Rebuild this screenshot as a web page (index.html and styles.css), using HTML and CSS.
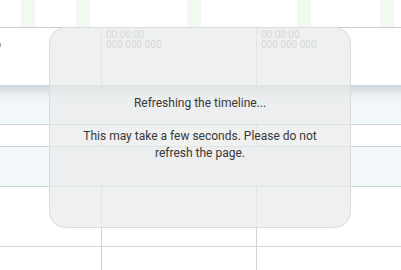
FILE: index.html
```html
<!DOCTYPE html>
<html>
<head>
<meta charset="utf-8">
<link rel="stylesheet" href="styles.css">
</head>
<body>
<div class="page">
  <div class="header">
    <span></span><span class="stripe"></span>
    <span></span><span class="stripe"></span>
    <span></span><span class="stripe"></span>
    <span></span><span class="stripe"></span>
    <span></span><span class="stripe"></span>
  </div>
  <div class="row row-tall">
    <div class="cell"><span class="mark"></span></div>
    <div class="cell line"><div class="ts">00:06:00<br>000 000 000</div></div>
    <div class="cell line"><div class="ts">00:08:00<br>000 000 000</div></div>
  </div>
  <div class="row row-blue shadow"></div>
  <div class="row row-short">
    <div class="cell"></div>
    <div class="cell line"></div>
    <div class="cell line"></div>
  </div>
  <div class="row row-blue"></div>
  <div class="row row-tall2">
    <div class="cell"></div>
    <div class="cell line"></div>
    <div class="cell line"></div>
  </div>
  <div class="row row-last">
    <div class="cell"></div>
    <div class="cell line"></div>
    <div class="cell line"></div>
  </div>

  <div class="overlay">
    <p class="title">Refreshing the timeline...</p>
    <p class="msg">This may take a few seconds. Please do not<br>refresh the page.</p>
  </div>
</div>
</body>
</html>
```
FILE: styles.css
```css
html, body {
  margin: 0;
  padding: 0;
  background: #fff;
}
.page {
  position: relative;
  width: 401px;
  height: 270px;
  overflow: hidden;
  font-family: Roboto, "Liberation Sans", sans-serif;
}
.header {
  height: 27px;
  display: grid;
  grid-template-columns: 21px 14px 41px 14px 97px 14px 96px 14px 69px 14px;
  border-bottom: 1px solid #cdcdcd;
}
.stripe {
  background: #f1f9f1;
}
.row {
  display: grid;
  grid-template-columns: 101px 155px 1fr;
  border-bottom: 1px solid #d4d9dc;
}
.cell.line {
  border-left: 1px solid #d3d3d3;
}
.row-tall { height: 57px; border-bottom: none; }
.row-blue {
  height: 39px;
  background: #f2f7fa;
  border-bottom: 1px solid #c9d2d6;
}
.shadow {
  background: linear-gradient(to bottom, #ccd4d8 0px, #e3e9ec 7px, #f0f5f8 14px, #f2f7fa 20px);
}
.row-short { height: 21px; border-bottom: 1px solid #c9d2d6; }
.row-tall2 { height: 59px; border-bottom: 1px solid #d6d6d6; }
.row-last { height: 30px; border-bottom: none; }
.cell {
  position: relative;
}
.mark {
  display: block;
  width: 1px;
  height: 4px;
  margin-top: 15px;
  background: #aaa;
}
.ts {
  padding: 2px 0 0 4px;
  font-size: 10px;
  line-height: 10px;
  color: #a6a6a6;
}
.overlay {
  position: absolute;
  left: 49px;
  top: 27px;
  width: 300px;
  height: 199px;
  border: 1px solid #dcdcdc;
  border-radius: 16px;
  background: rgba(233, 234, 234, 0.72);
  box-sizing: content-box;
  text-align: center;
  color: #383838;
  font-size: 12px;
  line-height: 17px;
}
.overlay p {
  margin: 0;
}
.title {
  padding-top: 67px;
}
.msg {
  margin-top: 16px !important;
}
```
